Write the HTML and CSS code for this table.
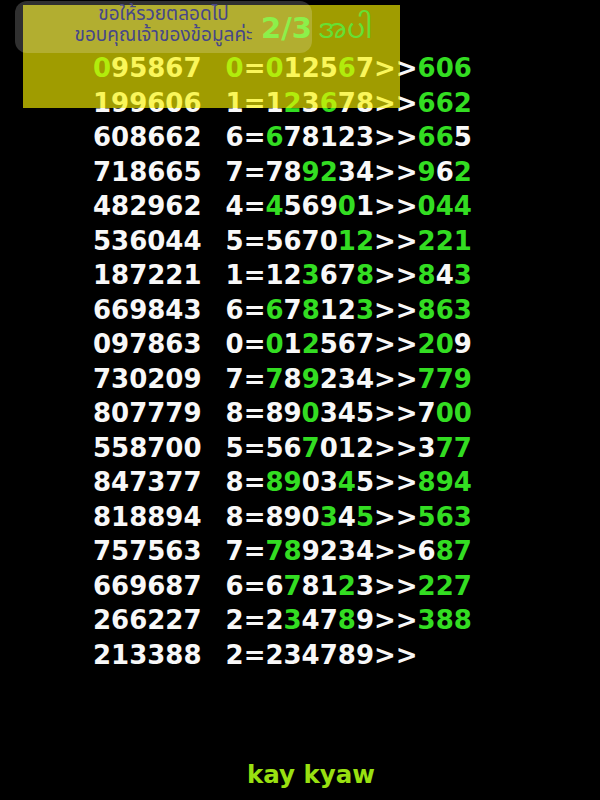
FILE: index.html
```html
<!DOCTYPE html>
<html lang="th">
<head>
<meta charset="utf-8">
<title>2/3</title>
<link rel="stylesheet" href="styles.css">
</head>
<body>
<main class="page">
  <div class="rows">
    <div class="row"><span class="num"><b>0</b>95867</span><span class="calc"><b>0</b>=<b>0</b>125<b>6</b>7&gt;&gt;<b>606</b></span></div>
    <div class="row"><span class="num">199606</span><span class="calc">1=1<b>2</b>3<b>6</b>78&gt;&gt;<b>662</b></span></div>
    <div class="row"><span class="num">608662</span><span class="calc">6=<b>6</b>78123&gt;&gt;<b>66</b>5</span></div>
    <div class="row"><span class="num">718665</span><span class="calc">7=78<b>92</b>34&gt;&gt;<b>9</b>6<b>2</b></span></div>
    <div class="row"><span class="num">482962</span><span class="calc">4=<b>4</b>569<b>0</b>1&gt;&gt;<b>044</b></span></div>
    <div class="row"><span class="num">536044</span><span class="calc">5=5670<b>12</b>&gt;&gt;<b>221</b></span></div>
    <div class="row"><span class="num">187221</span><span class="calc">1=12<b>3</b>67<b>8</b>&gt;&gt;<b>8</b>4<b>3</b></span></div>
    <div class="row"><span class="num">669843</span><span class="calc">6=<b>6</b>7<b>8</b>12<b>3</b>&gt;&gt;<b>863</b></span></div>
    <div class="row"><span class="num">097863</span><span class="calc">0=<b>0</b>1<b>2</b>567&gt;&gt;<b>20</b>9</span></div>
    <div class="row"><span class="num">730209</span><span class="calc">7=<b>7</b>8<b>9</b>234&gt;&gt;<b>779</b></span></div>
    <div class="row"><span class="num">807779</span><span class="calc">8=89<b>0</b>345&gt;&gt;7<b>00</b></span></div>
    <div class="row"><span class="num">558700</span><span class="calc">5=56<b>7</b>012&gt;&gt;3<b>77</b></span></div>
    <div class="row"><span class="num">847377</span><span class="calc">8=<b>89</b>03<b>4</b>5&gt;&gt;<b>894</b></span></div>
    <div class="row"><span class="num">818894</span><span class="calc">8=890<b>3</b>4<b>5</b>&gt;&gt;<b>563</b></span></div>
    <div class="row"><span class="num">757563</span><span class="calc">7=<b>78</b>9234&gt;&gt;6<b>87</b></span></div>
    <div class="row"><span class="num">669687</span><span class="calc">6=6<b>7</b>81<b>2</b>3&gt;&gt;<b>227</b></span></div>
    <div class="row"><span class="num">266227</span><span class="calc">2=2<b>3</b>47<b>8</b>9&gt;&gt;<b>388</b></span></div>
    <div class="row"><span class="num">213388</span><span class="calc">2=234789&gt;&gt;</span></div>
  </div>
  <p class="sign">kay kyaw</p>

  <div class="overlay"></div>
  <div class="note">
    <span class="line">ขอให้รวยตลอดไป</span>
    <span class="line">ขอบคุณเจ้าของข้อมูลค่ะ</span>
  </div>
  <div class="tag"><span class="frac">2/3</span> <span class="mm">အပါ</span></div>
</main>
</body>
</html>
```
FILE: styles.css
```css
html, body {
  margin: 0;
  padding: 0;
  background: #000;
}
.page {
  position: relative;
  width: 600px;
  height: 800px;
  overflow: hidden;
  background: #000;
  font-family: "DejaVu Sans", Verdana, sans-serif;
}
.rows {
  padding: 51px 0 0 93px;
  display: flex;
  flex-direction: column;
}
.row {
  display: flex;
  gap: 24px;
  height: 34.5px;
  line-height: 34.5px;
  font-size: 26px;
  font-weight: bold;
  color: #f8f8f8;
  white-space: nowrap;
}
.row b {
  color: #33dd22;
  font-weight: bold;
}
.sign {
  margin: 88px 0 0 247px;
  font-size: 24.5px;
  font-weight: bold;
  color: #99e011;
  line-height: normal;
}
.overlay {
  position: absolute;
  left: 23px;
  top: 5px;
  width: 377px;
  height: 103px;
  background: rgba(250, 244, 0, 0.64);
}
.note {
  position: absolute;
  left: 15px;
  top: 1px;
  width: 297px;
  height: 52px;
  box-sizing: border-box;
  padding-top: 3px;
  border-radius: 12px;
  background: rgba(255, 255, 255, 0.19);
  display: flex;
  flex-direction: column;
  align-items: center;
  font-family: "Noto Sans Thai", Tahoma, "DejaVu Sans", sans-serif;
  font-size: 19px;
  color: #46468a;
}
.note .line {
  display: block;
  line-height: 21px;
}
.tag {
  position: absolute;
  left: 261px;
  top: 14px;
  height: 29px;
  font-family: "DejaVu Sans", Verdana, sans-serif;
  font-weight: bold;
  font-size: 29px;
  line-height: 29px;
  white-space: nowrap;
  word-spacing: -4px;
}
.frac {
  color: #8cf04a;
}
.mm {
  font-family: "Noto Sans Myanmar", "Myanmar Text", "Padauk", sans-serif;
  font-weight: normal;
  font-size: 27px;
  line-height: 0;
  color: #66e033;
  word-spacing: normal;
}
```
